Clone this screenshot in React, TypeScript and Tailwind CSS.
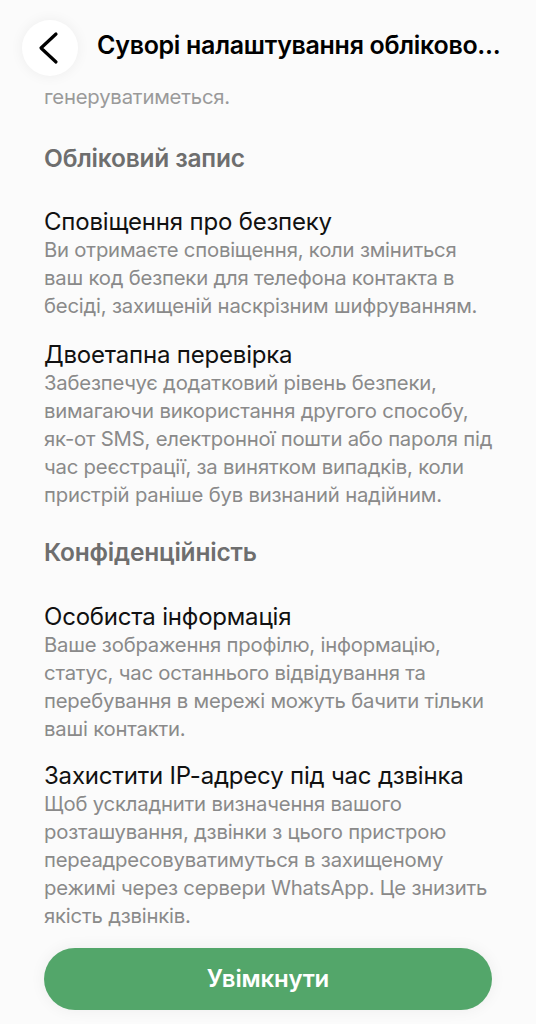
const font = { fontFamily: "Inter, 'Noto Sans', sans-serif" };

function Item({ title, lines, className }: { title: string; lines: string[]; className?: string }) {
  return (
    <div className={className}>
      <div className="text-[24px] leading-[28px] text-[#111111] whitespace-nowrap tracking-[-0.2px]">{title}</div>
      <div className="text-[20.3px] leading-[28px] text-[#8a8a8a] tracking-[-0.2px]">
        {lines.map((l, i) => (
          <div key={i} className="whitespace-nowrap">
            {l}
          </div>
        ))}
      </div>
    </div>
  );
}

function Heading({ children, className }: { children: string; className?: string }) {
  return (
    <div className={`text-[24.5px] leading-[28px] font-semibold text-[#6e6e6e] tracking-[-0.2px] ${className ?? ""}`}>
      {children}
    </div>
  );
}

export default function App() {
  return (
    <div className="h-screen w-full overflow-hidden bg-[#fbfbfb] flex flex-col" style={font}>
      <div className="h-[83px] flex items-center pl-[22px] shrink-0">
        <div className="h-[56px] w-[56px] rounded-full bg-white shadow-[0_0_14px_rgba(0,0,0,0.06)] flex items-center justify-center mt-[12px]">
          <svg width="56" height="56" viewBox="0 0 56 56" fill="none">
            <polyline
              points="34,14 19,28 34,42"
              stroke="#000"
              strokeWidth="3.2"
              strokeLinecap="round"
              strokeLinejoin="round"
            />
          </svg>
        </div>
        <div className="ml-[19px] text-[25px] font-semibold text-black tracking-[-0.3px] whitespace-nowrap mt-[8px]">
          Суворі налаштування обліково...
        </div>
      </div>

      <div className="px-[44px] flex flex-col">
        <div className="text-[20.3px] leading-[28px] text-[#9a9a9a] tracking-[-0.2px]">генеруватиметься.</div>

        <Heading className="mt-[33px]">Обліковий запис</Heading>

        <Item
          className="mt-[36px]"
          title="Сповіщення про безпеку"
          lines={[
            "Ви отримаєте сповіщення, коли зміниться",
            "ваш код безпеки для телефона контакта в",
            "бесіді, захищеній наскрізним шифруванням.",
          ]}
        />
        <Item
          className="mt-[21px]"
          title="Двоетапна перевірка"
          lines={[
            "Забезпечує додатковий рівень безпеки,",
            "вимагаючи використання другого способу,",
            "як-от SMS, електронної пошти або пароля під",
            "час реєстрації, за винятком випадків, коли",
            "пристрій раніше був визнаний надійним.",
          ]}
        />

        <Heading className="mt-[29px]">Конфіденційність</Heading>

        <Item
          className="mt-[37px]"
          title="Особиста інформація"
          lines={[
            "Ваше зображення профілю, інформацію,",
            "статус, час останнього відвідування та",
            "перебування в мережі можуть бачити тільки",
            "ваші контакти.",
          ]}
        />
        <Item
          className="mt-[19px]"
          title="Захистити IP-адресу під час дзвінка"
          lines={[
            "Щоб ускладнити визначення вашого",
            "розташування, дзвінки з цього пристрою",
            "переадресовуватимуться в захищеному",
            "режимі через сервери WhatsApp. Це знизить",
            "якість дзвінків.",
          ]}
        />

        <button className="mt-[18px] h-[62px] w-full rounded-full bg-[#53a66a] text-white text-[24px] font-semibold tracking-[-0.2px] shadow-[0_0_16px_rgba(0,0,0,0.06)]">
          Увімкнути
        </button>
      </div>
    </div>
  );
}
